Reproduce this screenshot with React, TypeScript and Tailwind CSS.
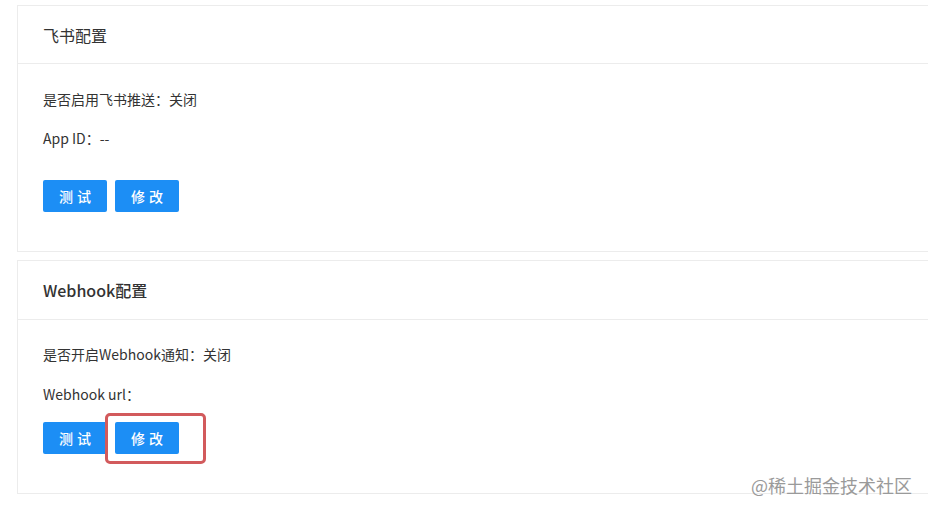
export default function App() {
  const Btn = (props: { text: string }) => {
    return (
      <button className="h-8 w-16 rounded-[2px] bg-[#1c8ef5] text-[14px] font-medium tracking-[0.3em] text-white indent-[0.3em]">
        {props.text}
      </button>
    );
  };
  return (
    <div
      className="relative h-[512px] w-[928px] overflow-hidden bg-white text-[#333]"
      style={{ fontFamily: '"Noto Sans CJK SC", "Noto Sans", sans-serif' }}
    >
      <div className="flex flex-col gap-[8px] pl-[17px] pt-[5px]">
        <div className="w-[930px] border border-[#ececec] bg-white">
          <div className="flex h-[58px] items-center border-b border-[#ececec] pl-[25px] text-[16px]">飞书配置</div>
          <div className="pl-[25px] pt-[25px] pb-[39px] text-[14px]">
            <div className="h-5 leading-5">是否启用飞书推送：关闭</div>
            <div className="mt-[19px] h-5 leading-5">App ID：--</div>
            <div className="mt-[32px] flex gap-2">
              <Btn text="测试" />
              <Btn text="修改" />
            </div>
          </div>
        </div>
        <div className="w-[930px] border border-[#ececec] bg-white">
          <div className="flex h-[59px] items-center border-b border-[#ececec] pl-[25px] text-[16px] font-medium">Webhook配置</div>
          <div className="pl-[25px] pt-[24px] pb-[39px] text-[14px]">
            <div className="h-5 leading-5">是否开启Webhook通知：关闭</div>
            <div className="mt-[20px] h-5 leading-5">Webhook url：</div>
            <div className="mt-[18px] flex gap-2">
              <Btn text="测试" />
              <div className="relative">
                <Btn text="修改" />
                <div className="absolute -left-[10px] -top-[9px] h-[51px] w-[101px] rounded-[5px] border-[3px] border-[#d25a5c]"></div>
              </div>
            </div>
          </div>
        </div>
      </div>
      <div className="absolute right-[16px] top-[472px] text-[18px] text-[#9a9a9a]">@稀土掘金技术社区</div>
    </div>
  );
}
